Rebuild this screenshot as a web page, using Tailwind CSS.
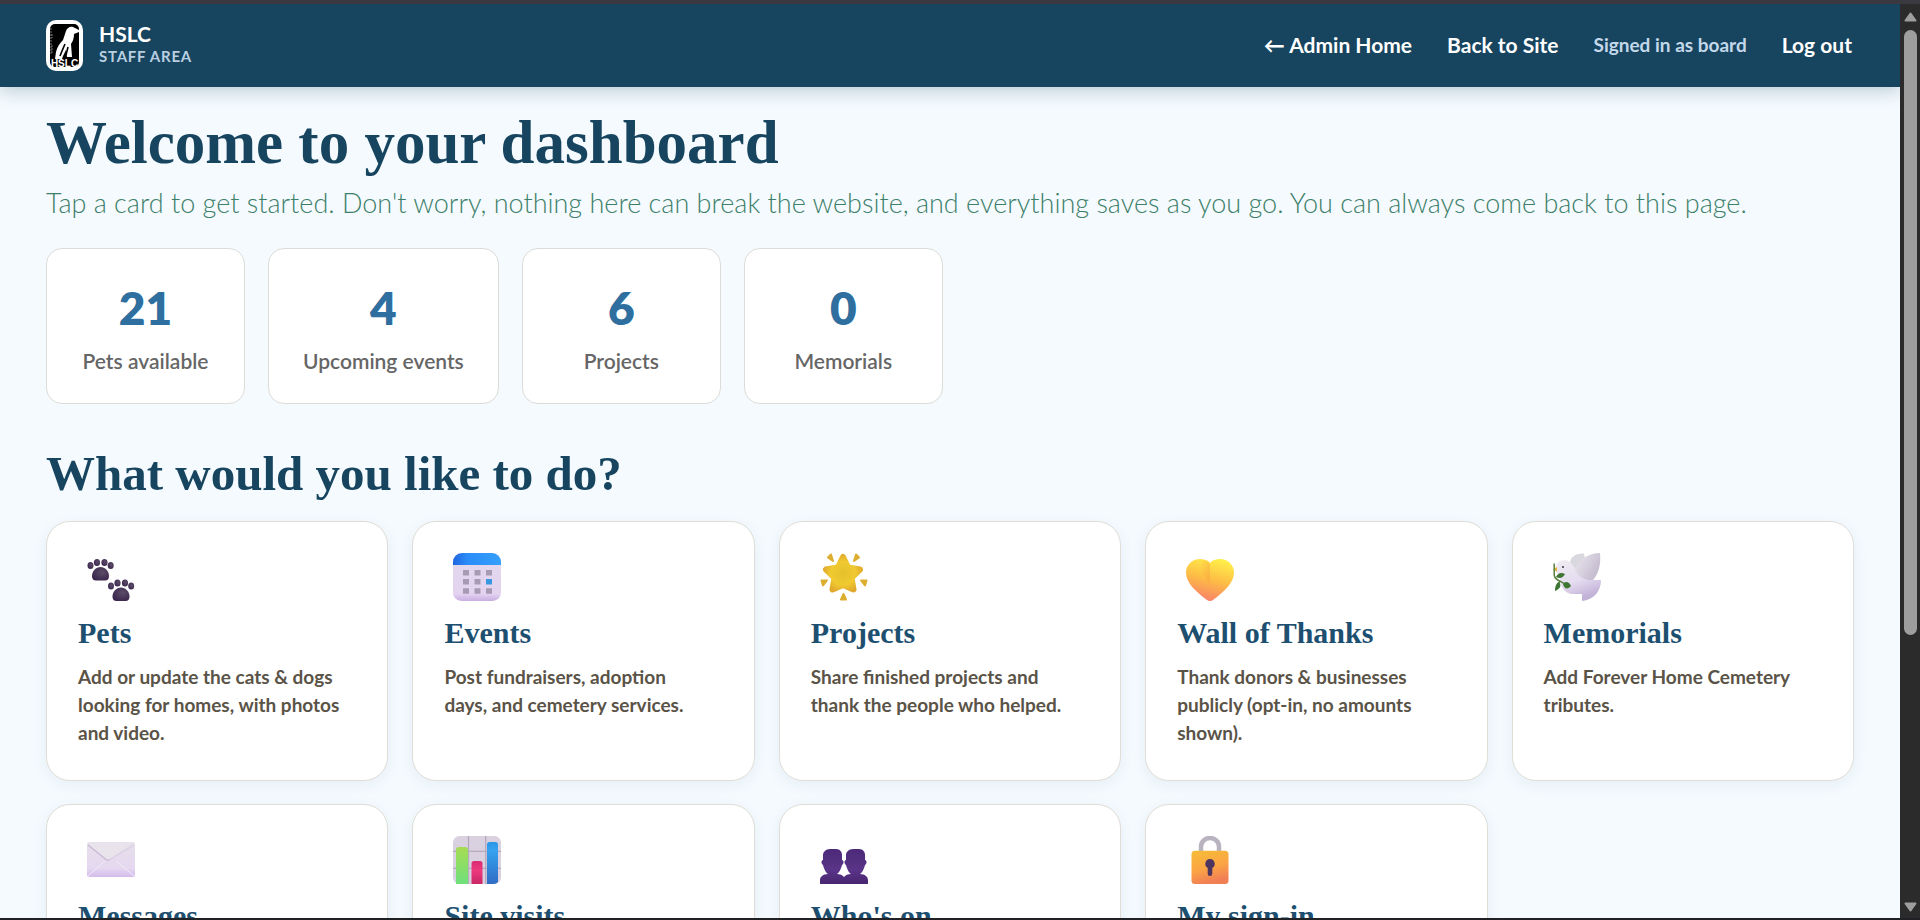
<!DOCTYPE html>
<html lang="en">
<head>
    <meta charset="UTF-8">
    <meta name="viewport" content="width=device-width, initial-scale=1.0">
    <title>HSLC Staff Area</title>
    <script src="https://cdn.jsdelivr.net/npm/@tailwindcss/browser@4"></script>
</head>
<body class="h-screen overflow-hidden flex flex-col bg-[#f4fafe] font-['Lato','Open_Sans',sans-serif]">
    <div class="h-1 shrink-0 bg-[#3a393f]"></div>

    <div class="flex flex-1 min-h-0">
        <div class="flex-1 min-w-0 overflow-hidden">
            <header class="flex items-center justify-between pl-[46px] pr-12 py-4 bg-[#17455f] shadow-[0_4px_16px_rgba(23,69,95,0.25)]">
                <a href="#" class="flex items-center gap-4">
                    <svg class="w-[37px] h-[51px]" viewBox="0 0 37 51" aria-hidden="true">
                        <rect width="37" height="51" rx="10" fill="#fff"/>
                        <rect x="4" y="4" width="29" height="43" rx="5" fill="#000"/>
                        <path d="M20 11c1-3 4-5 7-4l6 3v2l-5 2c0 4-1 7-3 10l1 13h-5l-1-7-3 6-1 3H9l1-7c1-5 4-9 7-12z" fill="#fff"/>
                        <path d="M19 24l-3 7-2 5M22 27l-2 8" stroke="#000" stroke-width="1.600" fill="none"/>
                        <path d="M5 8v26M6 14v4M6 25v8" stroke="#777" stroke-dasharray="2 1"/>
                        <text x="18.500" y="47" font-family="Liberation Sans" font-weight="700" font-size="10" text-anchor="middle" fill="#fff">HSLC</text>
                    </svg>
                    <span class="flex flex-col pb-0.5">
                        <span class="text-[21px] leading-[22px] font-bold text-white">HSLC</span>
                        <span class="text-[15px] leading-[22px] font-bold tracking-wider text-[#b9cfe0]">STAFF AREA</span>
                    </span>
                </a>
                <nav class="flex items-center gap-[35px] pb-0.5 text-[21px] leading-7 font-bold text-white">
                    <a href="#">← Admin Home</a>
                    <a href="#">Back to Site</a>
                    <span class="text-[19px] text-[#c3d8ea]">Signed in as board</span>
                    <button type="button" class="font-bold">Log out</button>
                </nav>
            </header>

            <main class="px-[46px] pt-[22px]">
                <h1 class="font-['Liberation_Serif',serif] text-[61px] leading-[68px] font-bold text-[#17455f]">Welcome to your dashboard</h1>
                <p class="mt-1.5 text-[27px] leading-10 font-light text-[#3d8069]">Tap a card to get started. Don't worry, nothing here can break the website, and everything saves as you go. You can always come back to this page.</p>

                <dl class="mt-[25px] flex flex-wrap gap-[23px] text-center">
                    <div class="flex flex-col-reverse min-w-[199px] px-[34px] pt-8 pb-7 bg-white border border-[#dcdcd8] rounded-2xl">
                        <dt class="mt-3 text-[21px] leading-7 font-semibold text-[#666]">Pets available</dt>
                        <dd class="text-[46px] leading-[54px] font-extrabold text-[#2f6f9f]">21</dd>
                    </div>
                    <div class="flex flex-col-reverse min-w-[199px] px-[34px] pt-8 pb-7 bg-white border border-[#dcdcd8] rounded-2xl">
                        <dt class="mt-3 text-[21px] leading-7 font-semibold text-[#666]">Upcoming events</dt>
                        <dd class="text-[46px] leading-[54px] font-extrabold text-[#2f6f9f]">4</dd>
                    </div>
                    <div class="flex flex-col-reverse min-w-[199px] px-[34px] pt-8 pb-7 bg-white border border-[#dcdcd8] rounded-2xl">
                        <dt class="mt-3 text-[21px] leading-7 font-semibold text-[#666]">Projects</dt>
                        <dd class="text-[46px] leading-[54px] font-extrabold text-[#2f6f9f]">6</dd>
                    </div>
                    <div class="flex flex-col-reverse min-w-[199px] px-[34px] pt-8 pb-7 bg-white border border-[#dcdcd8] rounded-2xl">
                        <dt class="mt-3 text-[21px] leading-7 font-semibold text-[#666]">Memorials</dt>
                        <dd class="text-[46px] leading-[54px] font-extrabold text-[#2f6f9f]">0</dd>
                    </div>
                </dl>

                <h2 class="mt-10 font-['Liberation_Serif',serif] text-[49px] leading-[60px] font-bold text-[#17455f]">What would you like to do?</h2>

                <div class="mt-[17px] grid grid-cols-5 auto-rows-fr gap-x-6 gap-y-[23px]">
                    <!-- Pets -->
                    <a href="#" class="min-h-[260px] px-[31px] pt-[31px] pb-7 bg-white border border-[#dfddd6] rounded-3xl shadow-[0_4px_16px_rgba(23,69,95,0.06)]">
                        <svg class="ml-[9px] size-12" viewBox="0 0 48 48" aria-hidden="true">
                            <defs>
                                <radialGradient id="paw" cx=".6" cy=".4" r=".7"><stop stop-color="#5c4d68"/><stop offset="1" stop-color="#38224a"/></radialGradient>
                                <g id="pawprint" fill="url(#paw)">
                                    <path d="M13.500 14c4.500 0 8.500 4 8.500 9 0 3-1.500 4.500-4 4.500H9c-2.500 0-4-1.500-4-4.500 0-5 4-9 8.500-9z"/>
                                    <ellipse cx="3.500" cy="12.500" rx="3" ry="3.600"/>
                                    <ellipse cx="10" cy="9.500" rx="3.100" ry="3.600"/>
                                    <ellipse cx="17.500" cy="9.500" rx="3.100" ry="3.600"/>
                                    <ellipse cx="23.700" cy="12.500" rx="3" ry="3.600"/>
                                </g>
                            </defs>
                            <use href="#pawprint"/>
                            <use href="#pawprint" x="20.500" y="20.500"/>
                        </svg>
                        <h3 class="mt-3.5 font-['Liberation_Serif',serif] text-[30px] leading-9 font-bold text-[#1d4f70]">Pets</h3>
                        <p class="mt-3 pr-3 text-[19px] leading-7 font-bold text-[#5a5347]">Add or update the cats &amp; dogs looking for homes, with photos and video.</p>
                    </a>
                    <!-- Events -->
                    <a href="#" class="min-h-[260px] px-[31px] pt-[31px] pb-7 bg-white border border-[#dfddd6] rounded-3xl shadow-[0_4px_16px_rgba(23,69,95,0.06)]">
                        <svg class="ml-[9px] size-12" viewBox="0 0 48 48" aria-hidden="true">
                            <defs>
                                <linearGradient id="calBody" x2="0" y2="1"><stop stop-color="#e2d8ec"/><stop offset=".85" stop-color="#e3d3f0"/><stop offset="1" stop-color="#c9aee2"/></linearGradient>
                                <linearGradient id="calTop"><stop stop-color="#1f66e0"/><stop offset=".3" stop-color="#2b8cf8"/><stop offset="1" stop-color="#35a0fb"/></linearGradient>
                            </defs>
                            <rect width="48" height="48" rx="8.500" fill="url(#calBody)"/>
                            <path d="M0 12V9a9 9 0 0 1 9-9h30a9 9 0 0 1 9 9v3z" fill="url(#calTop)"/>
                            <path d="M10 17h6v5.500h-6zM21.500 17h6v5.500h-6zM33 17h6v5.500h-6zM10 26h6v5.500h-6zM21.500 26h6v5.500h-6zM10 35.300h6v5.500h-6zM21.500 35.300h6v5.500h-6zM33 35.300h6v5.500h-6z" fill="#a79bb3"/>
                            <path d="M33 26h6v5.500h-6z" fill="#3a98e0"/>
                        </svg>
                        <h3 class="mt-3.5 font-['Liberation_Serif',serif] text-[30px] leading-9 font-bold text-[#1d4f70]">Events</h3>
                        <p class="mt-3 pr-3 text-[19px] leading-7 font-bold text-[#5a5347]">Post fundraisers, adoption days, and cemetery services.</p>
                    </a>
                    <!-- Projects -->
                    <a href="#" class="min-h-[260px] px-[31px] pt-[31px] pb-7 bg-white border border-[#dfddd6] rounded-3xl shadow-[0_4px_16px_rgba(23,69,95,0.06)]">
                        <svg class="ml-[9px] size-12" viewBox="0 0 48 48" aria-hidden="true">
                            <defs>
                                <radialGradient id="star" cx=".5" cy=".5" r=".6"><stop stop-color="#e6c02c"/><stop offset=".6" stop-color="#f0ca30"/><stop offset="1" stop-color="#e0a82c"/></radialGradient>
                            </defs>
                            <path d="M23 4l5.200 10.500 11.800 2-8.500 8.300 2 11.700L23 32l-10.500 4.500 2-11.700L6 16.500l11.800-2z" fill="url(#star)" stroke="url(#star)" stroke-width="6" stroke-linejoin="round"/>
                            <path d="M11 1.500l2 6.500-5-3.500zM36 1.500l-2 6.500 5-3.500zM1.500 27.500h5.500l-4 5zM46.500 27.500H41l4 5zM23.500 41l2.500 5.500h-5z" fill="#dcae32" stroke="#dcae32" stroke-width="2" stroke-linejoin="round"/>
                        </svg>
                        <h3 class="mt-3.5 font-['Liberation_Serif',serif] text-[30px] leading-9 font-bold text-[#1d4f70]">Projects</h3>
                        <p class="mt-3 pr-3 text-[19px] leading-7 font-bold text-[#5a5347]">Share finished projects and thank the people who helped.</p>
                    </a>
                    <!-- Wall of Thanks -->
                    <a href="#" class="min-h-[260px] px-[31px] pt-[31px] pb-7 bg-white border border-[#dfddd6] rounded-3xl shadow-[0_4px_16px_rgba(23,69,95,0.06)]">
                        <svg class="ml-[9px] size-12" viewBox="0 0 48 48" aria-hidden="true">
                            <defs>
                                <linearGradient id="heart" x1=".7" y1="0" x2=".4" y2="1"><stop stop-color="#fff04a"/><stop offset=".5" stop-color="#fdbd45"/><stop offset="1" stop-color="#f9806a"/></linearGradient>
                                <linearGradient id="heartShade"><stop stop-color="#f79a3c" stop-opacity="0"/><stop offset="1" stop-color="#f79a3c" stop-opacity=".4"/></linearGradient>
                            </defs>
                            <path d="M24 10c2-3 6-4 10-4 8 0 14 6 14 13.500 0 10-9 18.500-21 27.500-2 1.500-4 1.500-6 0C9 38 0 29.500 0 19.500 0 12 6 6 14 6c4 0 8 1 10 4z" fill="url(#heart)"/>
                            <path d="M14 7c4 0 8 1 10 4v20c-4-5-10-12-10-24z" fill="url(#heartShade)"/>
                        </svg>
                        <h3 class="mt-3.5 font-['Liberation_Serif',serif] text-[30px] leading-9 font-bold text-[#1d4f70]">Wall of Thanks</h3>
                        <p class="mt-3 pr-3 text-[19px] leading-7 font-bold text-[#5a5347]">Thank donors &amp; businesses publicly (opt-in, no amounts shown).</p>
                    </a>
                    <!-- Memorials -->
                    <a href="#" class="min-h-[260px] px-[31px] pt-[31px] pb-7 bg-white border border-[#dfddd6] rounded-3xl shadow-[0_4px_16px_rgba(23,69,95,0.06)]">
                        <svg class="ml-[9px] size-12" viewBox="0 0 48 48" aria-hidden="true">
                            <defs>
                                <linearGradient id="dove" x2=".4" y2="1"><stop stop-color="#efecf2"/><stop offset=".6" stop-color="#e4dcf0"/><stop offset="1" stop-color="#c3b2d8"/></linearGradient>
                                <linearGradient id="wing" x2="1" y2=".6"><stop stop-color="#ebe7ef"/><stop offset="1" stop-color="#c4bbcf"/></linearGradient>
                            </defs>
                            <path d="M17 10c0-6 6-10 14-9.500l1 6-9 10z" fill="#d9d8de"/>
                            <path d="M11 7c5 0 8 3 10 7l19 13h8c0 11-7 20-19 21v-7H20C12 41 7 34 7 26c-1-3-4-6-4-11 0-5 4-8 8-8z" fill="url(#dove)"/>
                            <path d="M22 17C25 7 35 0 47 0c1 11-1 20-7 27-7 1-15-3-18-10z" fill="url(#wing)"/>
                            <circle cx="10" cy="14" r="1.100" fill="#4a4050"/>
                            <path d="M4 14l-4 2 4 3z" fill="#e0b840"/>
                            <path d="M1.200 10.500V22c0 4 5 6 11 9M7 28l-2 4" stroke="#557f3c" stroke-width="1.500" fill="none"/>
                            <path d="M3 24c2-4 5-5 9-3-2 4-5 5-9 3zM10 31c2-3 6-3 8 2-3 4-7 3-8-2zM6 29c3 4 1 7-4 9 0-4 1-8 4-9z" fill="#3e7634"/>
                        </svg>
                        <h3 class="mt-3.5 font-['Liberation_Serif',serif] text-[30px] leading-9 font-bold text-[#1d4f70]">Memorials</h3>
                        <p class="mt-3 pr-3 text-[19px] leading-7 font-bold text-[#5a5347]">Add Forever Home Cemetery tributes.</p>
                    </a>
                    <!-- Messages -->
                    <a href="#" class="min-h-[260px] px-[31px] pt-[31px] pb-7 bg-white border border-[#dfddd6] rounded-3xl shadow-[0_4px_16px_rgba(23,69,95,0.06)]">
                        <svg class="ml-[9px] size-12" viewBox="0 0 48 48" aria-hidden="true">
                            <defs>
                                <linearGradient id="mail" x2="0" y2="1"><stop stop-color="#e6dfea"/><stop offset=".75" stop-color="#e5d8f0"/><stop offset="1" stop-color="#d3bbec"/></linearGradient>
                            </defs>
                            <rect y="6" width="48" height="35" rx="2.500" fill="url(#mail)"/>
                            <path d="M1 40l17-15M47 40L29 25" stroke="#f2eaf8" fill="none"/>
                            <path d="M2 6.500h44L23 23c-1.500 1-2.500 1-4 0L1 8z" fill="#e9e3ec"/>
                            <path d="M1 9l18 14.500c1.500 1 2.500 1 4 0" stroke="#c9b8d6" stroke-width="1.300" fill="none"/>
                            <path d="M23 23.500L47 9" stroke="#d6cae0" fill="none"/>
                        </svg>
                        <h3 class="mt-3.5 font-['Liberation_Serif',serif] text-[30px] leading-9 font-bold text-[#1d4f70]">Messages</h3>
                    </a>
                    <!-- Site visits -->
                    <a href="#" class="min-h-[260px] px-[31px] pt-[31px] pb-7 bg-white border border-[#dfddd6] rounded-3xl shadow-[0_4px_16px_rgba(23,69,95,0.06)]">
                        <svg class="ml-[9px] size-12" viewBox="0 0 48 48" aria-hidden="true">
                            <defs>
                                <linearGradient id="barGreen" x2="0" y2="1"><stop stop-color="#a6dc52"/><stop offset="1" stop-color="#6fe07c"/></linearGradient>
                                <linearGradient id="barPink" x2="0" y2="1"><stop stop-color="#d92a72"/><stop offset=".4" stop-color="#ee3a7e"/><stop offset="1" stop-color="#c92765"/></linearGradient>
                                <linearGradient id="barBlue" x2="0" y2="1"><stop stop-color="#2b95e6"/><stop offset=".2" stop-color="#36a2f0"/><stop offset="1" stop-color="#2f6cc4"/></linearGradient>
                            </defs>
                            <rect width="48" height="48" rx="6.500" fill="#d9d0e0"/>
                            <path d="M15.500 0v48M32.700 0v48M0 15.300h48M0 32.300h48" stroke="#b5a9be" stroke-width="1.300"/>
                            <path d="M3 48V14q0-3 3-3h6q3 0 3 3v34z" fill="url(#barGreen)"/>
                            <path d="M18.500 48V27.500q0-2.500 2.500-2.500h6q2.500 0 2.500 2.500V48z" fill="url(#barPink)"/>
                            <path d="M34 48V8.500Q34 6 36.500 6h6Q45 6 45 8.500V46q-2 2-4 2z" fill="url(#barBlue)"/>
                        </svg>
                        <h3 class="mt-3.5 font-['Liberation_Serif',serif] text-[30px] leading-9 font-bold text-[#1d4f70]">Site visits</h3>
                    </a>
                    <!-- Who's on -->
                    <a href="#" class="min-h-[260px] px-[31px] pt-[31px] pb-7 bg-white border border-[#dfddd6] rounded-3xl shadow-[0_4px_16px_rgba(23,69,95,0.06)]">
                        <svg class="ml-[9px] size-12" viewBox="0 0 48 48" aria-hidden="true">
                            <defs>
                                <linearGradient id="bust" x2="0" y2="1"><stop stop-color="#4c2a78"/><stop offset=".6" stop-color="#5a3488"/><stop offset="1" stop-color="#47256f"/></linearGradient>
                                <path id="person" d="M10 13h6c4 0 6 3 6 6v5c2 0 2 4 0 5-1 4-3 8-5 9 5 0 8 3 8 6v4H0v-4c0-3 3-6 8-6-2-1-4-5-5-9-2-1-2-5 0-5v-5c0-3 3-6 7-6z" fill="url(#bust)"/>
                            </defs>
                            <use href="#person" x="23"/>
                            <use href="#person"/>
                        </svg>
                        <h3 class="mt-3.5 font-['Liberation_Serif',serif] text-[30px] leading-9 font-bold text-[#1d4f70]">Who's on</h3>
                    </a>
                    <!-- My sign-in -->
                    <a href="#" class="min-h-[260px] px-[31px] pt-[31px] pb-7 bg-white border border-[#dfddd6] rounded-3xl shadow-[0_4px_16px_rgba(23,69,95,0.06)]">
                        <svg class="ml-[9px] size-12" viewBox="0 0 48 48" aria-hidden="true">
                            <defs>
                                <linearGradient id="lock" x2=".3" y2="1"><stop stop-color="#f6bd35"/><stop offset=".6" stop-color="#fba445"/><stop offset="1" stop-color="#f17f55"/></linearGradient>
                            </defs>
                            <path d="M15 17v-6.500a9 8.500 0 0 1 18 0V17" stroke="#b9b3bf" stroke-width="4.500" fill="none"/>
                            <rect x="5.500" y="14.700" width="37" height="33.300" rx="3.500" fill="url(#lock)"/>
                            <path d="M24 23a4.600 4.800 0 0 1 2.300 9v5.500a2.300 2.500 0 0 1-4.600 0V32A4.600 4.800 0 0 1 24 23z" fill="#4d3560"/>
                        </svg>
                        <h3 class="mt-3.5 font-['Liberation_Serif',serif] text-[30px] leading-9 font-bold text-[#1d4f70]">My sign-in</h3>
                    </a>
                </div>
            </main>
        </div>

        <!-- Scrollbar -->
        <div class="w-5 shrink-0 flex flex-col items-center justify-between pt-2 pb-1.5 bg-[#2b2b2b]" aria-hidden="true">
            <div class="flex flex-col items-center flex-1 min-h-0 gap-2">
                <svg class="w-[13px] h-2.5 shrink-0" viewBox="0 0 13 10"><path d="M6.500 1.500l5 7h-10z" fill="#9e9e9e" stroke="#9e9e9e" stroke-width="2" stroke-linejoin="round"/></svg>
                <div class="w-[13px] h-[68%] rounded-full bg-[#9e9e9e]"></div>
            </div>
            <svg class="w-[13px] h-2.5 shrink-0" viewBox="0 0 13 10"><path d="M6.500 8.500l5-7h-10z" fill="#9e9e9e" stroke="#9e9e9e" stroke-width="2" stroke-linejoin="round"/></svg>
        </div>
    </div>

    <div class="h-0.5 shrink-0 bg-[#202124]"></div>
</body>
</html>
